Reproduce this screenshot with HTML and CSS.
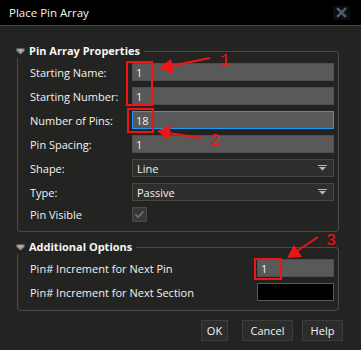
FILE: index.html
```html
<!DOCTYPE html>
<html>
<head>
<meta charset="utf-8">
<link rel="stylesheet" href="styles.css">
</head>
<body>
<div class="dialog">
  <div class="titlebar">
    <span class="title">Place Pin Array</span>
    <span class="close">
      <svg width="11" height="11" viewBox="0 0 11 11"><path d="M2 2 L9 9 M9 2 L2 9" stroke="#4d5d72" stroke-width="2.6" stroke-linecap="square"/></svg>
    </span>
  </div>

  <div class="group group-first">
    <div class="group-head">
      <svg class="group-icon" width="9" height="7" viewBox="0 0 9 7"><path d="M0.5 0.5 H8.5 V3 L4.5 6.5 L0.5 3 Z" fill="#8c8c8c"/><path d="M2 1.5 H7 L4.5 4 Z" fill="#c4c4c4"/></svg>
      <span class="group-title">Pin Array Properties</span>
      <span class="group-line"></span>
    </div>
    <div class="group-body grid-main">
      <label class="lbl">Starting Name:</label>
      <input class="field" type="text" value="1">
      <label class="lbl">Starting Number:</label>
      <input class="field" type="text" value="1">
      <label class="lbl">Number of Pins:</label>
      <input class="field field-focus" type="text" value="18">
      <label class="lbl">Pin Spacing:</label>
      <input class="field" type="text" value="1">
      <label class="lbl">Shape:</label>
      <div class="combo"><span>Line</span><svg width="9" height="6" viewBox="0 0 9 6"><path d="M0 0 H9 V1 H0 Z M1 2 H8 L4.5 5.5 Z" fill="#a6b8cf"/></svg></div>
      <label class="lbl">Type:</label>
      <div class="combo"><span>Passive</span><svg width="9" height="6" viewBox="0 0 9 6"><path d="M0 0 H9 V1 H0 Z M1 2 H8 L4.5 5.5 Z" fill="#a6b8cf"/></svg></div>
      <label class="lbl lbl-check">Pin Visible</label>
      <div class="check"><svg width="13" height="13" viewBox="0 0 13 13"><path d="M2.5 6.5 L5.2 9.2 L10.5 3.5" stroke="#6c6c6c" stroke-width="1.8" fill="none"/></svg></div>
    </div>
  </div>

  <div class="group group-second">
    <div class="group-head">
      <svg class="group-icon" width="9" height="7" viewBox="0 0 9 7"><path d="M0.5 0.5 H8.5 V3 L4.5 6.5 L0.5 3 Z" fill="#8c8c8c"/><path d="M2 1.5 H7 L4.5 4 Z" fill="#c4c4c4"/></svg>
      <span class="group-title">Additional Options</span>
      <span class="group-line"></span>
    </div>
    <div class="group-body grid-extra">
      <label class="lbl">Pin# Increment for Next Pin</label>
      <input class="field" type="text" value="1">
      <label class="lbl">Pin# Increment for Next Section</label>
      <input class="field field-black" type="text" value="">
    </div>
  </div>

  <div class="buttons">
    <button class="btn btn-ok">OK</button>
    <button class="btn btn-cancel">Cancel</button>
    <button class="btn btn-help">Help</button>
  </div>

  <svg class="marks" width="361" height="350" viewBox="0 0 361 350">
    <g fill="none" stroke="#f01414" stroke-width="2">
      <rect x="127" y="62" width="25" height="43"/>
      <rect x="128" y="109" width="25" height="23"/>
      <rect x="255" y="259" width="26" height="20"/>
      <path d="M210 58 L170 66"/>
      <path d="M201 138 L168 133"/>
      <path d="M318 237 L297 251"/>
    </g>
    <g fill="#f01414">
      <polygon points="159,68 171,59 174,74"/>
      <polygon points="157,131 171,125 169,140"/>
      <polygon points="287,258 294,245 302,257"/>
    </g>
    <g class="mark-num" fill="#f01414">
      <text x="220" y="65">1</text>
      <text x="210" y="145">2</text>
      <text x="326" y="245">3</text>
    </g>
  </svg>
</div>
</body>
</html>
```

FILE: styles.css
```css
* { box-sizing: border-box; }

html, body {
  margin: 0;
  padding: 0;
}

body {
  background: #232422;
  font-family: "Open Sans", "Noto Sans", sans-serif;
  font-size: 11px;
  color: #f2f2f2;
}

.dialog {
  position: relative;
  width: 361px;
  height: 350px;
  overflow: hidden;
  background: #232422;
}

.titlebar {
  height: 26px;
  background: #000;
  border-bottom: 1px solid #4a4a4a;
  display: flex;
  align-items: center;
  justify-content: space-between;
  padding: 0 11px 0 9px;
}

.title {
  font-size: 11.5px;
  color: #f4f4f4;
}

.close {
  display: flex;
  align-items: center;
  justify-content: center;
  width: 17px;
  height: 14px;
  background: #0b0d10;
}

.group {
  margin: 0 22px 0 17px;
}

.group-first { margin-top: 18px; }
.group-second { margin-top: 8px; }

.group-head {
  display: flex;
  align-items: center;
  height: 14px;
}

.group-icon {
  flex: none;
  margin-left: -1px;
}

.group-title {
  font-weight: 700;
  margin-left: 4px;
  margin-right: 4px;
  color: #f6f6f6;
  line-height: 14px;
}

.group-line {
  flex: 1;
  align-self: stretch;
  margin-top: 7px;
  border-top: 1px solid #4b4b4b;
  border-right: 1px solid #4b4b4b;
  border-top-right-radius: 4px;
}

.group-body {
  border: 1px solid #4b4b4b;
  border-top: none;
  border-radius: 0 0 4px 4px;
  padding: 5px 4px 9px 12px;
  display: grid;
  row-gap: 6px;
  align-items: center;
}

.grid-main {
  grid-template-columns: 102px 1fr;
  grid-auto-rows: 18px;
}

.grid-main .lbl-check,
.grid-main .check {
  grid-row-end: span 1;
}

.grid-main > :nth-last-child(-n+2) {
  height: 15px;
}

.grid-main {
  grid-template-rows: repeat(6, 18px) 15px;
}

.grid-extra {
  grid-template-columns: 1fr 77px;
  grid-auto-rows: 18px;
}

.lbl {
  white-space: nowrap;
  line-height: 15px;
}

.field {
  width: 100%;
  height: 18px;
  margin: 0;
  padding: 0 3px;
  font: inherit;
  color: #f3f0e0;
  background: #595959;
  border: 1px solid #4e4e4e;
  outline: none;
}

.field-focus {
  border-color: #1b9bf5;
}

.field-black {
  background: #000;
  border-color: #5a5a5a;
}

.combo {
  height: 18px;
  display: flex;
  align-items: center;
  justify-content: space-between;
  padding: 0 6px 0 4px;
  background: #2e2e2d;
  border: 1px solid #474747;
  color: #f2f2f2;
}

.check {
  width: 15px;
  height: 15px;
  background: #383838;
  border: 1px solid #4a4a4a;
  display: flex;
  align-items: center;
  justify-content: center;
}

.buttons {
  display: flex;
  justify-content: flex-end;
  gap: 9px;
  margin-top: 9px;
  padding-right: 18px;
}

.btn {
  height: 21px;
  padding: 0;
  font: inherit;
  color: #f4f4f4;
  background: #2c2c2b;
  border: 1px solid #3d3d3d;
}

.btn-ok { width: 27px; margin-right: 5px; }
.btn-cancel { width: 51px; }
.btn-help { width: 41px; }

.marks {
  position: absolute;
  left: 0;
  top: 0;
  pointer-events: none;
}

.mark-num {
  font-family: "Liberation Mono", monospace;
  font-size: 17px;
}
```
